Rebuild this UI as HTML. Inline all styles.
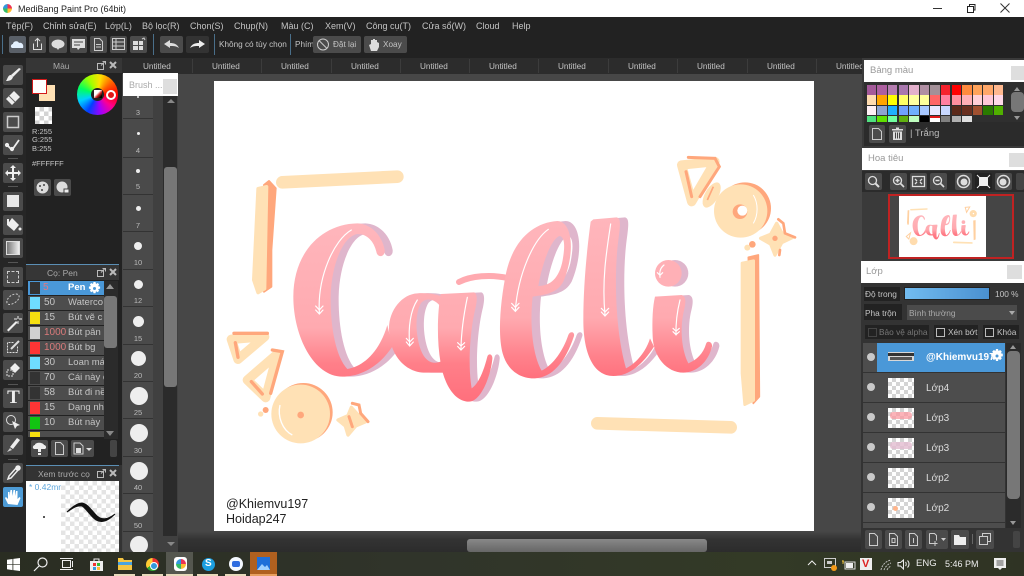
<!DOCTYPE html>
<html><head><meta charset="utf-8"><title>MediBang Paint Pro</title>
<style>
html,body{margin:0;padding:0;background:#222}
#r{position:relative;width:1024px;height:576px;overflow:hidden;background:#474747;font-family:"Liberation Sans","Noto Sans CJK JP",sans-serif;color:#c4c4c4;font-size:10px}
#r div,#r svg{position:absolute}
.t{position:absolute;white-space:nowrap;line-height:12px}
.m{font-size:9px}
.u{font-size:8.200px}
.b{background:#4b4b4b;border-radius:2px}
.ck{background:repeating-conic-gradient(#d4d4d4 0 25%,#fff 0 50%) 0 0/8px 8px}
.h{background:#fff;color:#9a9a9a;font-size:9.500px}
.x{background:#dedede}
.rw{left:28px;width:76px;height:14px;background:#4d4d4d}
.s{left:2px;top:1px;width:10px;height:12px;background:#333}
.la{left:863px;width:142px;height:29px;background:#4d4d4d}
.e{left:4px;top:10px;width:8px;height:8px;border-radius:50%;background:#c9c9c9}
.th{left:25px;top:5px;width:26px;height:20px}
.sw{height:9.500px;width:9.600px}
.n{position:absolute;left:123px;width:30px;text-align:center;font-size:7.500px;color:#bbb;line-height:10px}
.d{background:#eee;border-radius:50%}
.sp{left:123px;width:30px;height:1px;background:#333}
</style></head><body><div id="r">

<!-- title bar -->
<div style="left:0;top:0;width:1024px;height:17px;background:#fff"></div>
<div style="left:3px;top:4px;width:9px;height:9px;border-radius:50%;background:conic-gradient(#e35 0 25%,#fb3 0 50%,#3b6 0 75%,#39d 0)"></div>
<span class="t" style="left:18px;top:3px;color:#222;font-size:9px">MediBang Paint Pro (64bit)</span>
<div style="left:933px;top:8px;width:9px;height:1px;background:#333"></div>
<svg style="left:966px;top:3px" width="10" height="10" fill="none" stroke="#222"><path d="M1.500 3.500h6v6h-6zM3.500 3V1.500h5.500v5.500H8"/></svg>
<svg style="left:1000px;top:3px" width="10" height="10" stroke="#333"><path d="M.5 .5l9 9M9.500 .5l-9 9"/></svg>

<!-- menu -->
<div style="left:0;top:17px;width:1024px;height:41px;background:#222"></div>
<span class="t m" style="left:6px;top:20px">Tệp(F)</span>
<span class="t m" style="left:43px;top:20px">Chỉnh sửa(E)</span>
<span class="t m" style="left:105px;top:20px">Lớp(L)</span>
<span class="t m" style="left:142px;top:20px">Bộ lọc(R)</span>
<span class="t m" style="left:190px;top:20px">Chọn(S)</span>
<span class="t m" style="left:234px;top:20px">Chụp(N)</span>
<span class="t m" style="left:281px;top:20px">Màu (C)</span>
<span class="t m" style="left:325px;top:20px">Xem(V)</span>
<span class="t m" style="left:366px;top:20px">Công cụ(T)</span>
<span class="t m" style="left:422px;top:20px">Cửa sổ(W)</span>
<span class="t m" style="left:476px;top:20px">Cloud</span>
<span class="t m" style="left:512px;top:20px">Help</span>

<!-- toolbar -->
<div style="left:2px;top:35px;width:1px;height:19px;background:#4a6f8a"></div>
<div class="b" style="left:9px;top:36px;width:17px;height:17px;background:#5a6068"></div>
<svg style="left:9px;top:36px" width="17" height="17"><path d="M3 12c-2-1-1-4 1-4 0-3 5-4 6-1 3-1 5 2 4 5z" fill="#e4f1ff"/></svg>
<div class="b" style="left:29px;top:36px;width:17px;height:17px"></div>
<svg style="left:29px;top:36px" width="17" height="17" fill="none" stroke="#ddd"><path d="M4.500 7.500v6h8v-6M8.500 11V3M6 5l2.500-2.500L11 5"/></svg>
<div class="b" style="left:49px;top:36px;width:18px;height:17px"></div>
<svg style="left:49px;top:36px" width="18" height="17"><ellipse cx="9" cy="8" rx="6.500" ry="4.500" fill="#ddd"/><path d="M7 11l2 3 2-3z" fill="#ddd"/></svg>
<div class="b" style="left:70px;top:36px;width:17px;height:17px"></div>
<svg style="left:70px;top:36px" width="17" height="17"><path d="M2 3h13v9H10l-2 2-1-2H2z" fill="#ddd"/><path d="M4 6h9M4 9h6" stroke="#444"/></svg>
<div class="b" style="left:90px;top:36px;width:17px;height:17px"></div>
<svg style="left:90px;top:36px" width="17" height="17" fill="none" stroke="#ccc"><path d="M4.500 2.500h5l3 3v9h-8zM6 8.500h5M6 11h5"/></svg>
<div class="b" style="left:110px;top:36px;width:17px;height:17px"></div>
<svg style="left:110px;top:36px" width="17" height="17" fill="none" stroke="#ccc"><path d="M2.500 2.500h12v11h-12zM2.500 6h12M2.500 10h12M6 2.500v11"/></svg>
<div class="b" style="left:130px;top:36px;width:17px;height:17px"></div>
<svg style="left:130px;top:36px" width="17" height="17"><path d="M3 5h5v4H3zM9 5h4v4H9zM3 10h5v4H3zM9 10h4v4H9z" fill="#ddd"/><path d="M12 3l2-1 1 2" stroke="#ccc" fill="none"/></svg>
<div style="left:153px;top:34px;width:1px;height:21px;background:#4a6f8a"></div>
<div class="b" style="left:160px;top:36px;width:23px;height:17px"></div>
<svg style="left:160px;top:36px" width="23" height="17"><path d="M4 8l6-4v3c4 0 7 1 9 5-3-2-5-2-9-2v2z" fill="#ddd"/></svg>
<div class="b" style="left:186px;top:36px;width:23px;height:17px;background:#333"></div>
<svg style="left:186px;top:36px" width="23" height="17"><path d="M19 8l-6-4v3c-4 0-7 1-9 5 3-2 5-2 9-2v2z" fill="#eee"/></svg>
<div style="left:214px;top:34px;width:1px;height:21px;background:#4a6f8a"></div>
<span class="t" style="left:219px;top:39px;font-size:8.200px">Không có tùy chọn</span>
<div style="left:290px;top:34px;width:1px;height:21px;background:#4a6f8a"></div>
<span class="t" style="left:295px;top:39px;font-size:8.200px">Phím</span>
<div class="b" style="left:313px;top:36px;width:48px;height:17px"></div>
<svg style="left:315px;top:37px" width="16" height="15" fill="none" stroke="#ccc"><circle cx="8" cy="7.500" r="5.500"/><path d="M4 3.500l8 8"/></svg>
<span class="t" style="left:333px;top:39px;font-size:8.200px">Đặt lại</span>
<div class="b" style="left:364px;top:36px;width:43px;height:17px"></div>
<svg style="left:367px;top:37px" width="15" height="15"><path d="M4 14L2 8l2-1V3h2v-1h2v1h2v2l2 1v4l-2 4z" fill="#ddd"/></svg>
<span class="t" style="left:383px;top:39px;font-size:8.200px">Xoay</span>

<!-- tabs -->
<div style="left:122px;top:58px;width:742px;height:16px;background:#2c2c2c"></div>
<span class="t u" style="left:143px;top:61px">Untitled</span>
<span class="t u" style="left:212px;top:61px">Untitled</span>
<span class="t u" style="left:281px;top:61px">Untitled</span>
<span class="t u" style="left:351px;top:61px">Untitled</span>
<span class="t u" style="left:420px;top:61px">Untitled</span>
<span class="t u" style="left:489px;top:61px">Untitled</span>
<span class="t u" style="left:558px;top:61px">Untitled</span>
<span class="t u" style="left:628px;top:61px">Untitled</span>
<span class="t u" style="left:697px;top:61px">Untitled</span>
<span class="t u" style="left:767px;top:61px">Untitled</span>
<span class="t u" style="left:836px;top:61px">Untitled</span>
<div style="left:192px;top:59px;width:1px;height:14px;background:#3c3c3c"></div>
<div style="left:261px;top:59px;width:1px;height:14px;background:#3c3c3c"></div>
<div style="left:331px;top:59px;width:1px;height:14px;background:#3c3c3c"></div>
<div style="left:400px;top:59px;width:1px;height:14px;background:#3c3c3c"></div>
<div style="left:469px;top:59px;width:1px;height:14px;background:#3c3c3c"></div>
<div style="left:538px;top:59px;width:1px;height:14px;background:#3c3c3c"></div>
<div style="left:608px;top:59px;width:1px;height:14px;background:#3c3c3c"></div>
<div style="left:677px;top:59px;width:1px;height:14px;background:#3c3c3c"></div>
<div style="left:747px;top:59px;width:1px;height:14px;background:#3c3c3c"></div>
<div style="left:816px;top:59px;width:1px;height:14px;background:#3c3c3c"></div>

<!-- left tool column -->
<div style="left:0;top:58px;width:26px;height:494px;background:#262626"></div>
<div class="b" style="left:3px;top:65px;width:20px;height:20px"></div>
<svg style="left:3px;top:65px" width="20" height="20"><path d="M16 3l2 1-8 8-2-2z" fill="#eee"/><path d="M8 10c-3 0-3 3-5 6 4 0 6-1 7-4z" fill="#eee"/></svg>
<div class="b" style="left:3px;top:88px;width:20px;height:20px"></div>
<svg style="left:3px;top:88px" width="20" height="20"><path d="M11 3l6 6-8 8-6-6z" fill="#eee"/><path d="M6 8l6 6" stroke="#666"/></svg>
<div class="b" style="left:3px;top:112px;width:20px;height:20px"></div>
<svg style="left:3px;top:112px" width="20" height="20" fill="none" stroke="#ccc" stroke-width="1.500"><path d="M4.500 4.500h11v11h-11z"/></svg>
<div class="b" style="left:3px;top:135px;width:20px;height:20px"></div>
<svg style="left:3px;top:135px" width="20" height="20" fill="none" stroke="#eee" stroke-width="1.800"><path d="M4 10l5 5 7-10"/><circle cx="4" cy="10" r="1.200" fill="#eee"/><circle cx="9" cy="14" r="1.200" fill="#eee"/></svg>
<div style="left:8px;top:158px;width:10px;height:1px;background:#555"></div>
<div class="b" style="left:3px;top:163px;width:20px;height:20px"></div>
<svg style="left:3px;top:163px" width="20" height="20" fill="#eee"><path d="M10 2l3 3h-2v4h4V7l3 3-3 3v-2h-4v4h2l-3 3-3-3h2v-4H5v2l-3-3 3-3v2h4V5H7z"/></svg>
<div style="left:8px;top:186px;width:10px;height:1px;background:#555"></div>
<div class="b" style="left:3px;top:192px;width:20px;height:19px"></div>
<div style="left:7px;top:195px;width:12px;height:12px;background:#e8e8e8"></div>
<div class="b" style="left:3px;top:215px;width:20px;height:20px"></div>
<svg style="left:3px;top:215px" width="20" height="20"><path d="M9 3l7 7-5 6-7-6z" fill="#eee"/><path d="M5 4v6" stroke="#eee" stroke-width="2"/><circle cx="17" cy="14" r="1.500" fill="#eee"/></svg>
<div class="b" style="left:3px;top:238px;width:20px;height:20px"></div>
<div style="left:6px;top:241px;width:14px;height:14px;background:linear-gradient(90deg,#777,#eee);border:1px solid #ddd;box-sizing:border-box"></div>
<div style="left:8px;top:262px;width:10px;height:1px;background:#555"></div>
<div class="b" style="left:3px;top:267px;width:20px;height:20px"></div>
<div style="left:7px;top:271px;width:10px;height:10px;border:1px dashed #ccc"></div>
<div class="b" style="left:3px;top:290px;width:20px;height:20px"></div>
<svg style="left:3px;top:290px" width="20" height="20" fill="none" stroke="#ccc" stroke-dasharray="2 1.500"><path d="M4 13c-1-4 4-9 9-9 4 0 4 4 1 7-3 3-9 5-10 2z"/></svg>
<div class="b" style="left:3px;top:313px;width:20px;height:20px"></div>
<svg style="left:3px;top:313px" width="20" height="20"><path d="M4 17L13 8l1.500 1.500-9 9z" fill="#eee"/><path d="M15 3v3M15 8v3M11 6h3M16 6h3" stroke="#eee"/></svg>
<div class="b" style="left:3px;top:337px;width:20px;height:20px"></div>
<svg style="left:3px;top:337px" width="20" height="20" fill="none" stroke="#ddd"><path d="M14.500 9.500v6h-10v-10h6" stroke-dasharray="2 1"/><path d="M8 12l8-8" stroke-width="2"/></svg>
<div class="b" style="left:3px;top:360px;width:20px;height:20px"></div>
<svg style="left:3px;top:360px" width="20" height="20"><path d="M12 3l5 5-5 5-5-5z" fill="#eee"/><path d="M4 10h6v6H4z" fill="none" stroke="#ddd" stroke-dasharray="2 1"/></svg>
<div style="left:8px;top:384px;width:10px;height:1px;background:#555"></div>
<div class="b" style="left:3px;top:388px;width:20px;height:20px"></div>
<span class="t" style="left:5px;top:388px;width:17px;text-align:center;font:bold 19px/20px 'Liberation Serif',serif;color:#eee">T</span>
<div class="b" style="left:3px;top:412px;width:20px;height:20px"></div>
<svg style="left:3px;top:412px" width="20" height="20" fill="none" stroke="#ddd"><circle cx="8" cy="8" r="4.500"/><path d="M9 9l3 8 2-3 3-1z" fill="#eee" stroke="none"/></svg>
<div class="b" style="left:3px;top:435px;width:20px;height:20px"></div>
<svg style="left:3px;top:435px" width="20" height="20"><path d="M14 3l3 2-7 9-3-2z" fill="#eee"/><path d="M7 13l2 2-5 2z" fill="#ccc"/></svg>
<div style="left:8px;top:459px;width:10px;height:1px;background:#555"></div>
<div class="b" style="left:3px;top:463px;width:20px;height:20px"></div>
<svg style="left:3px;top:463px" width="20" height="20" fill="none" stroke="#eee" stroke-width="1.500"><path d="M14 4l2 2-8 9-3 1 1-3z"/><circle cx="15" cy="5" r="2" fill="#eee"/></svg>
<div class="b" style="left:3px;top:487px;width:20px;height:20px;background:#4d9bd6"></div>
<svg style="left:3px;top:487px" width="20" height="20" fill="#fff"><path d="M5 17l-3-6 1-1 2 2V5h1.500v4L7.500 3h1.500l.5 6 1-6h1.500v6l1-5h1.500v8l2-2 1 1-3 7z"/></svg>

<!-- colour panel -->
<div style="left:26px;top:58px;width:96px;height:206px;background:#222"></div>
<div style="left:26px;top:58px;width:96px;height:15px;background:#363636"></div>
<span class="t" style="left:53px;top:60px;font-size:8.500px;color:#aaa">Màu</span>
<svg style="left:96px;top:60px" width="24" height="11" fill="none" stroke="#bbb"><path d="M1.500 3.500h6v6h-6zM5 5.500l4-4M6.500 1.500h3v3"/><path d="M14 2l6 6M20 2l-6 6" stroke-width="2"/></svg>
<div style="left:39px;top:85px;width:16px;height:16px;background:#ffe1b5"></div>
<div style="left:32px;top:79px;background:#fff;border:1.500px solid #d21a1a;box-sizing:content-box;width:13px;height:13px"></div>
<div class="ck" style="left:35px;top:107px;width:17px;height:17px;background-size:9px 9px"></div>
<div style="left:77px;top:74px;width:41px;height:41px;border-radius:50%;background:conic-gradient(from 90deg,#f00,#ff0090,#a000ff,#0040ff,#00d0ff,#00ff60,#a0ff00,#ffe000,#ff6000,#f00)"></div>
<div style="left:91px;top:88px;width:13px;height:13px;border-radius:50%;background:#222"></div>
<div style="left:94px;top:90px;width:8px;height:8px;background:linear-gradient(135deg,#fff 40%,#c22 60%,#000 85%)"></div>
<div style="left:106px;top:90px;width:6px;height:6px;border-radius:50%;background:#e01818;border:2px solid #fff"></div>
<span class="t" style="left:32px;top:128px;font-size:7.500px;line-height:8.300px">R:255<br>G:255<br>B:255</span>
<span class="t" style="left:32px;top:158px;font-size:7.500px">#FFFFFF</span>
<div class="b" style="left:34px;top:179px;width:17px;height:17px"></div>
<svg style="left:34px;top:179px" width="17" height="17"><circle cx="8.500" cy="8.500" r="6" fill="#ddd"/><circle cx="6" cy="7" r="1" fill="#444"/><circle cx="10" cy="6" r="1" fill="#444"/><circle cx="8" cy="11" r="1" fill="#444"/></svg>
<div class="b" style="left:54px;top:179px;width:17px;height:17px"></div>
<svg style="left:54px;top:179px" width="17" height="17"><circle cx="8" cy="8" r="5.500" fill="#ddd"/><path d="M10 10h5v4h-5z" fill="#eee" stroke="#444"/></svg>

<!-- brush size panel -->
<div style="left:123px;top:96px;width:30px;height:456px;background:#4a4a4a"></div>
<div style="left:153px;top:96px;width:25px;height:456px;background:#404040"></div>
<div style="left:163px;top:96px;width:14px;height:440px;background:#2b2b2b"></div>
<div style="left:164px;top:167px;width:13px;height:220px;background:#777;border-radius:3px"></div>
<div style="left:167px;top:99px;width:0;height:0;border:4px solid transparent;border-top:0;border-bottom:4px solid #888"></div>
<div style="left:167px;top:542px;width:0;height:0;border:4px solid transparent;border-bottom:0;border-top:4px solid #888"></div>
<div class="h" style="left:123px;top:73px;width:55px;height:23px"></div>
<span class="t" style="left:129px;top:79px;font-size:9px;color:#aaa">Brush ...</span>
<div class="x" style="left:163px;top:79px;width:14px;height:15px"></div>
<span class="n" style="top:108px">3</span><div class="sp" style="top:118px"></div>
<span class="n" style="top:146px">4</span><div class="sp" style="top:157px"></div>
<span class="n" style="top:182px">5</span><div class="sp" style="top:194px"></div>
<span class="n" style="top:221px">7</span><div class="sp" style="top:231px"></div>
<span class="n" style="top:258px">10</span><div class="sp" style="top:269px"></div>
<span class="n" style="top:296px">12</span><div class="sp" style="top:306px"></div>
<span class="n" style="top:334px">15</span><div class="sp" style="top:344px"></div>
<span class="n" style="top:371px">20</span><div class="sp" style="top:381px"></div>
<span class="n" style="top:408px">25</span><div class="sp" style="top:418px"></div>
<span class="n" style="top:446px">30</span><div class="sp" style="top:456px"></div>
<span class="n" style="top:483px">40</span><div class="sp" style="top:493px"></div>
<span class="n" style="top:521px">50</span><div class="sp" style="top:531px"></div>
<div class="d" style="left:137px;top:96px;width:2px;height:2px"></div>
<div class="d" style="left:137px;top:132px;width:3px;height:3px"></div>
<div class="d" style="left:136px;top:169px;width:4px;height:4px"></div>
<div class="d" style="left:136px;top:206px;width:5px;height:5px"></div>
<div class="d" style="left:134px;top:242px;width:8px;height:8px"></div>
<div class="d" style="left:134px;top:280px;width:9px;height:9px"></div>
<div class="d" style="left:133px;top:316px;width:11px;height:11px"></div>
<div class="d" style="left:131px;top:351px;width:15px;height:15px"></div>
<div class="d" style="left:130px;top:387px;width:18px;height:18px"></div>
<div class="d" style="left:130px;top:424px;width:18px;height:18px"></div>
<div class="d" style="left:130px;top:462px;width:18px;height:18px"></div>
<div class="d" style="left:130px;top:499px;width:18px;height:18px"></div>
<div class="d" style="left:130px;top:536px;width:18px;height:18px"></div>

<!-- brush list panel -->
<div style="left:26px;top:264px;width:96px;height:201px;background:#222"></div>
<div style="left:26px;top:264px;width:93px;height:1px;background:#5b8fb5"></div>
<div style="left:26px;top:265px;width:93px;height:15px;background:#363636"></div>
<span class="t" style="left:47px;top:267px;font-size:8.500px;color:#aaa">Cọ: Pen</span>
<svg style="left:96px;top:267px" width="24" height="11" fill="none" stroke="#bbb"><path d="M1.500 3.500h6v6h-6zM5 5.500l4-4M6.500 1.500h3v3"/><path d="M14 2l6 6M20 2l-6 6" stroke-width="2"/></svg>
<div style="left:104px;top:281px;width:14px;height:158px;background:#2b2b2b"></div>
<div style="left:104px;top:296px;width:13px;height:52px;background:#777;border-radius:3px"></div>
<div style="left:106px;top:284px;width:0;height:0;border:4px solid transparent;border-top:0;border-bottom:5px solid #999"></div>
<div style="left:106px;top:431px;width:0;height:0;border:4px solid transparent;border-bottom:0;border-top:5px solid #888"></div>

<div class="rw" style="top:281px;background:#4a98d8"><div class="s"></div>
<span class="t" style="left:15px;top:1px;color:#e6787f;font-size:10px">5</span><span class="t" style="left:40px;top:1px;color:#fff;font-weight:bold;font-size:9.500px">Pen</span></div>
<svg style="left:88px;top:282px" width="13" height="13"><path d="M5.500 0h2l.5 2 1.700-1 1.400 1.400-1 1.700 2 .5v2l-2 .5 1 1.700-1.400 1.400-1.700-1-.5 2h-2l-.5-2-1.700 1-1.400-1.400 1-1.700-2-.5v-2l2-.5-1-1.700L3.300 1 5 2z" fill="#fff"/><circle cx="6.500" cy="6.500" r="1.500" fill="#4a98d8"/></svg>
<div class="rw" style="top:296px;overflow:hidden"><div class="s" style="background:#6fdcff"></div><span class="t" style="left:16px;top:1px">50</span><span class="t" style="left:40px;top:1px;font-size:9.500px">Waterco</span></div>
<div class="rw" style="top:311px;overflow:hidden"><div class="s" style="background:#f5df10"></div><span class="t" style="left:16px;top:1px">15</span><span class="t" style="left:40px;top:1px;font-size:9.500px">Bút vẽ c</span></div>
<div class="rw" style="top:326px;overflow:hidden"><div class="s" style="background:#d0d0d0"></div><span class="t" style="left:16px;top:1px;color:#d97a7a">1000</span><span class="t" style="left:40px;top:1px;font-size:9.500px">Bút pân</span></div>
<div class="rw" style="top:341px;overflow:hidden"><div class="s" style="background:#ff3535"></div><span class="t" style="left:16px;top:1px;color:#d97a7a">1000</span><span class="t" style="left:40px;top:1px;font-size:9.500px">Bút bg</span></div>
<div class="rw" style="top:356px;overflow:hidden"><div class="s" style="background:#6fdcff"></div><span class="t" style="left:16px;top:1px">30</span><span class="t" style="left:40px;top:1px;font-size:9.500px">Loan má</span></div>
<div class="rw" style="top:371px;overflow:hidden"><div class="s"></div><span class="t" style="left:16px;top:1px">70</span><span class="t" style="left:40px;top:1px;font-size:9.500px">Cái này c</span></div>
<div class="rw" style="top:386px;overflow:hidden"><div class="s"></div><span class="t" style="left:16px;top:1px">58</span><span class="t" style="left:40px;top:1px;font-size:9.500px">Bút đi nề</span></div>
<div class="rw" style="top:401px;overflow:hidden"><div class="s" style="background:#ff3535"></div><span class="t" style="left:16px;top:1px">15</span><span class="t" style="left:40px;top:1px;font-size:9.500px">Dạng nh</span></div>
<div class="rw" style="top:416px;overflow:hidden"><div class="s" style="background:#12c412"></div><span class="t" style="left:16px;top:1px">10</span><span class="t" style="left:40px;top:1px;font-size:9.500px">Bút này</span></div>
<div class="rw" style="top:431px;height:6px;overflow:hidden"><div class="s" style="background:#f5df10"></div></div>
<div class="b" style="left:31px;top:440px;width:17px;height:17px"></div>
<svg style="left:31px;top:440px" width="17" height="17"><path d="M3 9c-2-1-1-4 1-4 0-3 8-3 9 0 2 0 3 3 1 4h-4v3H7V9z" fill="#eee"/><path d="M7 13h3v2H7z" fill="#eee"/></svg>
<div class="b" style="left:51px;top:440px;width:17px;height:17px"></div>
<svg style="left:51px;top:440px" width="17" height="17" fill="none" stroke="#ccc"><path d="M4.500 2.500h5l3 3v9h-8z"/></svg>
<div class="b" style="left:71px;top:440px;width:23px;height:17px"></div>
<svg style="left:71px;top:440px" width="23" height="17"><path d="M3 3h6l3 3v8H3z" fill="none" stroke="#ccc"/><path d="M5 8h5v5H5z" fill="#ddd"/><path d="M15 8h6l-3 3z" fill="#ddd"/></svg>
<div style="left:110px;top:440px;width:7px;height:17px;background:#444;border-radius:2px"></div>

<!-- brush preview -->
<div style="left:26px;top:465px;width:96px;height:87px;background:#333"></div>
<div style="left:26px;top:465px;width:93px;height:1px;background:#5b8fb5"></div>
<span class="t" style="left:38px;top:468px;font-size:8.500px;color:#aaa">Xem trước cọ</span>
<svg style="left:96px;top:468px" width="24" height="11" fill="none" stroke="#bbb"><path d="M1.500 3.500h6v6h-6zM5 5.500l4-4M6.500 1.500h3v3"/><path d="M14 2l6 6M20 2l-6 6" stroke-width="2"/></svg>
<div style="left:26px;top:481px;width:35px;height:72px;background:#fff"></div>
<div class="ck" style="left:61px;top:481px;width:58px;height:72px;background-size:9px 9px;background-image:repeating-conic-gradient(#e4e4e4 0 25%,#fff 0 50%)"></div>
<span class="t" style="left:29px;top:481px;width:32px;overflow:hidden;font-size:8.500px;color:#5fa7dd">* 0.42mm</span>
<div style="left:43px;top:516px;width:2px;height:2px;background:#222;border-radius:50%"></div>
<svg style="left:61px;top:495px" width="58" height="50" fill="none"><path d="M6 17C12 11 17 8 21 8C27 9 30 15 36 21C41 25 46 25 54 19C46 27 40 28 35 25C29 21 26 14 21 11C16 10 12 13 6 17Z" fill="#111" stroke="#111"/></svg>

<!-- canvas -->
<div style="left:214px;top:81px;width:600px;height:450px;background:#fff"></div>
<svg style="left:214px;top:81px" width="600" height="450" viewBox="214 81 600 450">
<defs>
<linearGradient id="g1" gradientUnits="userSpaceOnUse" x1="0" y1="220" x2="0" y2="760"><stop offset="0" stop-color="#ffb6bc"/><stop offset=".58" stop-color="#ffaab0"/><stop offset=".78" stop-color="#ff7f89"/><stop offset="1" stop-color="#ff6f7c"/></linearGradient>
<linearGradient id="g2" gradientUnits="userSpaceOnUse" x1="0" y1="230" x2="0" y2="720"><stop offset="0" stop-color="#ffb6bc"/><stop offset=".62" stop-color="#ffaab0"/><stop offset=".85" stop-color="#ff828c"/><stop offset="1" stop-color="#ff6f7c"/></linearGradient>
</defs>
<g transform="translate(214,150) scale(.33333)">
<path d="M205,97L550,80" stroke="#ffe1b5" stroke-width="38" stroke-linecap="round" fill="none"/>
<path d="M150,105L165,93L185,115L172,300L172,410L150,425Z" fill="#ffa77c" stroke="#ffa77c" stroke-width="6" stroke-linejoin="round"/>
<path d="M132,116L158,110L152,416L132,428L119,390Z" fill="#ffe1b5" stroke="#ffe1b5" stroke-width="10" stroke-linejoin="round"/>
<g fill="#fff" stroke="#ffe1b5" stroke-width="28" stroke-linejoin="round"><path d="M52,568L152,560L72,628Z"/><path d="M190,612L100,690L155,743Z"/></g>
<path d="M60,550L160,550M64,578L72,622M175,600L205,605L170,730M112,695L145,732" stroke="#ffa77c" stroke-width="10" fill="none" stroke-linecap="round"/>
<circle cx="268" cy="787" r="88" fill="#ffa77c"/><circle cx="260" cy="792" r="88" fill="#ffe1b5"/><circle cx="260" cy="795" r="10" fill="#ffa77c"/>
<path d="M198,765C190,800 205,840 235,855" stroke="#fff" stroke-width="4" fill="none"/>
<circle cx="155" cy="780" r="9" fill="#ffa77c"/><circle cx="140" cy="792" r="8" fill="#ffe1b5"/>
<path d="M372,810L402,797L412,772L430,792L455,815L425,828L402,855L394,828Z" fill="#ffe1b5" stroke="#ffe1b5" stroke-width="10" stroke-linejoin="round"/>
<path d="M415,760L435,765L440,790L462,815M405,800L415,830" stroke="#ffa77c" stroke-width="9" fill="none" stroke-linecap="round"/>
<g fill="#dfb6cc">
<path transform="translate(24,0)" d="M430,220C475,222 505,260 512,300C514,322 490,325 487,305C480,275 460,252 432,252C390,255 352,340 350,440C349,530 365,620 400,657C445,650 495,610 520,525L535,590C495,650 440,680 385,680C300,680 238,560 238,440C238,310 320,222 430,220Z"/>
<path transform="translate(22,0)" d="M610,430C565,432 525,480 525,535C525,610 570,668 635,668L690,668L690,630C665,645 640,640 625,610C605,570 600,490 622,458C640,440 665,450 680,470L695,445C670,432 640,428 610,430Z"/>
<path transform="translate(22,0)" d="M680,432L780,427C790,430 790,448 785,472C770,530 760,640 773,715C795,700 810,660 820,620C823,608 837,612 835,627C830,680 800,755 765,755C720,755 690,700 680,640C668,570 670,490 680,432Z"/>
</g>
<g fill="url(#g1)">
<path d="M430,220C475,222 505,260 512,300C514,322 490,325 487,305C480,275 460,252 432,252C390,255 352,340 350,440C349,530 365,620 400,657C445,650 495,610 520,525L535,590C495,650 440,680 385,680C300,680 238,560 238,440C238,310 320,222 430,220Z"/>
<path d="M610,430C565,432 525,480 525,535C525,610 570,668 635,668L690,668L690,630C665,645 640,640 625,610C605,570 600,490 622,458C640,440 665,450 680,470L695,445C670,432 640,428 610,430Z"/>
<path d="M680,432L780,427C790,430 790,448 785,472C770,530 760,640 773,715C795,700 810,660 820,620C823,608 837,612 835,627C830,680 800,755 765,755C720,755 690,700 680,640C668,570 670,490 680,432Z"/>
</g>
<path d="M735,396C770,378 830,372 885,385" stroke="#ffaab0" stroke-width="18" stroke-linecap="round" fill="none"/>
<g stroke="#fff" stroke-width="3.500" fill="none" stroke-linecap="round">
<path d="M412,240C360,270 310,380 316,488M305,468L316,480L327,468M305,480L316,492L327,480"/>
<path d="M610,450C590,480 582,530 587,585M577,565L587,576L598,565M577,576L587,588L598,576"/>
<path d="M760,442C750,490 742,540 741,595M731,578L741,588L752,578M731,589L741,600L752,589"/>
</g>
</g>
<g transform="translate(500,140) scale(.33333)">
<path d="M292,850L692,862" stroke="#ffe1b5" stroke-width="38" stroke-linecap="round" fill="none"/>
<path d="M745,352L775,345L778,770L760,790Z" fill="#ffa77c" stroke="#ffa77c" stroke-width="5" stroke-linejoin="round"/>
<path d="M726,369L761,362L761,781L734,794L726,700Z" fill="#ffe1b5" stroke="#ffe1b5" stroke-width="8" stroke-linejoin="round"/>
<path d="M545,75L645,65L575,185Z" fill="#fff" stroke="#ffe1b5" stroke-width="28" stroke-linejoin="round"/>
<path d="M565,52L645,55L658,80L600,170M558,95L575,170" stroke="#ffa77c" stroke-width="9" fill="none" stroke-linecap="round"/>
<ellipse cx="635" cy="165" rx="20" ry="42" transform="rotate(30 635 165)" fill="#ffe1b5"/>
<path d="M640,140L622,180" stroke="#ffa77c" stroke-width="5"/>
<circle cx="735" cy="205" r="78" fill="#ffa77c"/><circle cx="722" cy="213" r="80" fill="#ffe1b5"/>
<circle cx="720" cy="215" r="22" fill="#ffa77c"/><circle cx="727" cy="212" r="15" fill="#fff"/>
<path d="M760,165C775,190 775,225 760,250" stroke="#fff" stroke-width="3" fill="none"/>
<path d="M782,295L812,283L830,250L845,278L878,292L845,308L825,345L812,312Z" fill="#ffe1b5" stroke="#ffe1b5" stroke-width="10" stroke-linejoin="round"/>
<path d="M835,238L850,250L855,280L885,292M840,330L838,345" stroke="#ffa77c" stroke-width="8" fill="none" stroke-linecap="round"/>
<circle cx="825" cy="295" r="8" fill="#ffa77c"/>
<circle cx="757" cy="313" r="10" fill="#ffa77c"/><circle cx="742" cy="323" r="9" fill="#ffe1b5"/>
<g fill="#dfb6cc">
<path transform="translate(25,0)" fill-rule="evenodd" d="M172,243C100,248 40,300 18,400C2,480 -8,580 8,640C22,690 60,717 105,715C155,712 195,670 222,588C225,575 210,572 205,585C190,630 160,675 125,692C100,650 88,560 98,470C130,465 170,462 190,425C207,385 218,330 210,290C205,260 190,243 172,243ZM178,288C150,300 125,380 115,438C150,438 178,415 188,360C195,320 195,290 178,288Z"/>
<path transform="translate(25,0)" d="M280,238L350,232C362,235 362,250 355,300C342,400 345,570 378,685C410,670 440,630 450,595L462,620C430,670 390,708 340,708C280,708 250,640 250,540C250,430 262,320 272,245Z"/>
<path transform="translate(22,0)" d="M465,470L545,465C560,470 558,490 550,520C540,570 545,630 565,670C590,660 610,640 618,612C621,600 638,605 636,620C625,665 590,698 550,698C500,698 460,650 458,590C456,540 458,500 465,470Z"/>
<circle cx="525" cy="400" r="40"/>
</g>
<g fill="url(#g2)">
<path fill-rule="evenodd" d="M172,243C100,248 40,300 18,400C2,480 -8,580 8,640C22,690 60,717 105,715C155,712 195,670 222,588C225,575 210,572 205,585C190,630 160,675 125,692C100,650 88,560 98,470C130,465 170,462 190,425C207,385 218,330 210,290C205,260 190,243 172,243ZM178,288C150,300 125,380 115,438C150,438 178,415 188,360C195,320 195,290 178,288Z"/>
<path d="M280,238L350,232C362,235 362,250 355,300C342,400 345,570 378,685C410,670 440,630 450,595L462,620C430,670 390,708 340,708C280,708 250,640 250,540C250,430 262,320 272,245Z"/>
<path d="M465,470L545,465C560,470 558,490 550,520C540,570 545,630 565,670C590,660 610,640 618,612C621,600 638,605 636,620C625,665 590,698 550,698C500,698 460,650 458,590C456,540 458,500 465,470Z"/>
<circle cx="505" cy="400" r="40" fill="#ffb0b6"/>
</g>
<g stroke="#fff" stroke-width="3.500" fill="none" stroke-linecap="round">
<path d="M145,268C100,300 55,400 46,510M35,490L46,502L57,490M35,502L46,514L57,502"/>
<path d="M332,252C320,330 305,420 315,525M304,505L315,516L326,505M304,516L315,528L326,516"/>
<path d="M492,375C480,385 478,395 480,412M472,398L480,406L488,398"/>
<path d="M540,480C530,520 527,550 528,585M519,565L528,574L538,565M519,575L528,584L538,575"/>
</g>
</g>
</svg>
<span class="t" style="left:226px;top:496px;font-size:12.500px;line-height:16px;color:#222">@Khiemvu197</span>
<span class="t" style="left:226px;top:511px;font-size:12.500px;line-height:16px;color:#222">Hoidap247</span>

<!-- bottom scroll -->
<div style="left:178px;top:531px;width:686px;height:21px;background:linear-gradient(#474747,#333 40%,#2c2c2c)"></div>
<div style="left:467px;top:539px;width:240px;height:13px;background:linear-gradient(#888,#666);border-radius:3px"></div>

<!-- right: palette -->
<div style="left:862px;top:58px;width:162px;height:494px;background:#3a3a3a"></div>
<div class="h" style="left:864px;top:60px;width:160px;height:22px"></div>
<span class="t" style="left:870px;top:65px;font-size:9.500px;color:#999">Bảng màu</span>
<div class="x" style="left:1011px;top:66px;width:13px;height:14px"></div>
<div style="left:864px;top:82px;width:160px;height:40px;background:#2f2f2f"></div>
<div style="left:1011px;top:92px;width:13px;height:20px;background:#777;border-radius:4px"></div>
<div style="left:1014px;top:87px;width:0;height:0;border:3px solid transparent;border-top:0;border-bottom:4px solid #999"></div>
<div style="left:1014px;top:116px;width:0;height:0;border:3px solid transparent;border-bottom:0;border-top:4px solid #999"></div>
<div class="sw" style="left:866.700px;top:85px;background:#a45a9a"></div><div class="sw" style="left:877.300px;top:85px;background:#ad5fa0"></div><div class="sw" style="left:887.900px;top:85px;background:#b57db0"></div><div class="sw" style="left:898.500px;top:85px;background:#a978ae"></div><div class="sw" style="left:909.100px;top:85px;background:#e3b0cc"></div><div class="sw" style="left:919.700px;top:85px;background:#b08fa3"></div><div class="sw" style="left:930.300px;top:85px;background:#a39098"></div><div class="sw" style="left:940.900px;top:85px;background:#f5222d"></div><div class="sw" style="left:951.500px;top:85px;background:#ff0000"></div><div class="sw" style="left:962.100px;top:85px;background:#ff8a3e"></div><div class="sw" style="left:972.700px;top:85px;background:#ffa35b"></div><div class="sw" style="left:983.300px;top:85px;background:#ffa86a"></div><div class="sw" style="left:993.900px;top:85px;background:#ffb88f"></div>
<div class="sw" style="left:866.700px;top:95.300px;background:#ffdcb0"></div><div class="sw" style="left:877.300px;top:95.300px;background:#ffa500"></div><div class="sw" style="left:887.900px;top:95.300px;background:#ffff00"></div><div class="sw" style="left:898.500px;top:95.300px;background:#ffff66"></div><div class="sw" style="left:909.100px;top:95.300px;background:#ffffa0"></div><div class="sw" style="left:919.700px;top:95.300px;background:#ffff99"></div><div class="sw" style="left:930.300px;top:95.300px;background:#ff6666"></div><div class="sw" style="left:940.900px;top:95.300px;background:#ff80a0"></div><div class="sw" style="left:951.500px;top:95.300px;background:#ff8f9f"></div><div class="sw" style="left:962.100px;top:95.300px;background:#ffb0b8"></div><div class="sw" style="left:972.700px;top:95.300px;background:#ffd0d8"></div><div class="sw" style="left:983.300px;top:95.300px;background:#ffc8d8"></div><div class="sw" style="left:993.900px;top:95.300px;background:#ffd8e8"></div>
<div class="sw" style="left:866.700px;top:105.700px;background:#fff0f5"></div><div class="sw" style="left:877.300px;top:105.700px;background:#8ea4d0"></div><div class="sw" style="left:887.900px;top:105.700px;background:#1eb0ff"></div><div class="sw" style="left:898.500px;top:105.700px;background:#70a0ff"></div><div class="sw" style="left:909.100px;top:105.700px;background:#70b0ff"></div><div class="sw" style="left:919.700px;top:105.700px;background:#a8c8ff"></div><div class="sw" style="left:930.300px;top:105.700px;background:#e8e8ff"></div><div class="sw" style="left:940.900px;top:105.700px;background:#c8d8ff"></div><div class="sw" style="left:951.500px;top:105.700px;background:#5c2a1a"></div><div class="sw" style="left:962.100px;top:105.700px;background:#6a3020"></div><div class="sw" style="left:972.700px;top:105.700px;background:#a05030"></div><div class="sw" style="left:983.300px;top:105.700px;background:#2a7a00"></div><div class="sw" style="left:993.900px;top:105.700px;background:#50b000"></div>
<div class="sw" style="left:866.700px;top:116px;height:6px;background:#50e080"></div><div class="sw" style="left:877.300px;top:116px;height:6px;background:#60e000"></div><div class="sw" style="left:887.900px;top:116px;height:6px;background:#70ffa0"></div><div class="sw" style="left:898.500px;top:116px;height:6px;background:#60b010"></div><div class="sw" style="left:909.100px;top:116px;height:6px;background:#c0ffc0"></div><div class="sw" style="left:919.700px;top:116px;height:6px;background:#000"></div><div class="sw" style="left:930.300px;top:116px;height:6px;background:#fff;border-top:2px solid #e01818;box-sizing:border-box"></div><div class="sw" style="left:940.900px;top:116px;height:6px;background:#808080"></div><div class="sw" style="left:951.500px;top:116px;height:6px;background:#b0b0b0"></div><div class="sw" style="left:962.100px;top:116px;height:6px;background:#e0e0e0"></div>
<div style="left:864px;top:122px;width:160px;height:24px;background:#2b2b2b"></div>
<div class="b" style="left:869px;top:125px;width:16px;height:18px"></div>
<svg style="left:869px;top:125px" width="16" height="18" fill="none" stroke="#ccc"><path d="M3.500 3.500h6l3 3v8h-9z"/></svg>
<div class="b" style="left:889px;top:125px;width:17px;height:18px"></div>
<svg style="left:889px;top:125px" width="17" height="18" fill="#ddd"><path d="M3 4h11v1.500H3zM7 2.500h3V4H7zM4 6.500h9V15H4z"/><path d="M6.500 7.500v6M8.500 7.500v6M10.500 7.500v6" stroke="#444"/></svg>
<span class="t" style="left:910px;top:128px;font-size:9.500px;color:#bbb">| Trắng</span>

<!-- navigator -->
<div class="h" style="left:862px;top:148px;width:162px;height:22px"></div>
<span class="t" style="left:868px;top:153px;font-size:9.500px;color:#999">Hoa tiêu</span>
<div class="x" style="left:1009px;top:153px;width:15px;height:14px"></div>
<div style="left:862px;top:171px;width:162px;height:21px;background:#2b2b2b"></div>
<div class="b" style="left:865px;top:173px;width:17px;height:17px"></div>
<div class="b" style="left:890px;top:173px;width:17px;height:17px"></div>
<div class="b" style="left:910px;top:173px;width:17px;height:17px"></div>
<div class="b" style="left:930px;top:173px;width:17px;height:17px"></div>
<div class="b" style="left:955px;top:173px;width:17px;height:17px"></div>
<div class="b" style="left:975px;top:173px;width:17px;height:17px;background:#222"></div>
<div class="b" style="left:995px;top:173px;width:17px;height:17px"></div>
<div class="b" style="left:1016px;top:173px;width:8px;height:17px;background:#444"></div>
<svg style="left:865px;top:173px" width="17" height="17" fill="none" stroke="#ddd" stroke-width="1.300"><circle cx="7.500" cy="7.500" r="4"/><path d="M10.500 10.500l3.500 3.500" stroke-width="2"/></svg>
<svg style="left:890px;top:173px" width="17" height="17" fill="none" stroke="#ddd" stroke-width="1.300"><circle cx="7.500" cy="7.500" r="4"/><path d="M10.500 10.500l3.500 3.500M5.500 7.500h4M7.500 5.500v4" stroke-width="1.600"/></svg>
<svg style="left:910px;top:173px" width="17" height="17" fill="none" stroke="#ddd" stroke-width="1.300"><path d="M2.500 3.500h12v10h-12zM5 6l2 2M12 6l-2 2M5 11l2-2M12 11l-2-2"/></svg>
<svg style="left:930px;top:173px" width="17" height="17" fill="none" stroke="#ddd" stroke-width="1.300"><circle cx="7.500" cy="7.500" r="4"/><path d="M10.500 10.500l3.500 3.500M5.500 7.500h4" stroke-width="1.600"/></svg>
<svg style="left:955px;top:173px" width="17" height="17"><circle cx="8.500" cy="8.500" r="6" fill="none" stroke="#ddd" stroke-width="1.500"/><circle cx="9" cy="9" r="3.500" fill="#ddd"/></svg>
<svg style="left:975px;top:173px" width="17" height="17"><path d="M4 4h9v9H4z" fill="#eee"/><path d="M2 2l3 3M15 2l-3 3M2 15l3-3M15 15l-3-3" stroke="#eee"/></svg>
<svg style="left:995px;top:173px" width="17" height="17"><circle cx="8.500" cy="8.500" r="6" fill="none" stroke="#ddd" stroke-width="1.500"/><circle cx="8" cy="9" r="3.500" fill="#ddd"/></svg>
<div style="left:862px;top:192px;width:162px;height:69px;background:#3a3a3a"></div>
<div style="left:888px;top:194px;width:126px;height:65px;background:#454545;border:2px solid #c02222;box-sizing:border-box"></div>
<div style="left:899px;top:196px;width:87px;height:61px;background:#fff"></div>
<svg style="left:899px;top:196px" width="87" height="61" viewBox="214 81 600 450">
<g transform="translate(214,150) scale(.33333)">
<path d="M200,97L555,80" stroke="#ffe1b5" stroke-width="34" stroke-linecap="round" fill="none"/>
<path d="M128,112L165,105L155,420L130,435L115,390Z" fill="#ffd0a0"/>
<path d="M192,610L98,690L155,745Z" fill="#fff" stroke="#ffd0a0" stroke-width="22"/>
<circle cx="260" cy="792" r="88" fill="#ffdcae"/>
<g fill="url(#g1)">
<path d="M430,220C475,222 505,260 512,300C514,322 490,325 487,305C480,275 460,252 432,252C390,255 352,340 350,440C349,530 365,620 400,657C445,650 495,610 520,525L535,590C495,650 440,680 385,680C300,680 238,560 238,440C238,310 320,222 430,220Z"/>
<path d="M610,430C565,432 525,480 525,535C525,610 570,668 635,668L690,668L690,630C665,645 640,640 625,610C605,570 600,490 622,458C640,440 665,450 680,470L695,445C670,432 640,428 610,430Z"/>
<path d="M680,432L780,427C790,430 790,448 785,472C770,530 760,640 773,715C795,700 810,660 820,620C823,608 837,612 835,627C830,680 800,755 765,755C720,755 690,700 680,640C668,570 670,490 680,432Z"/>
</g>
</g>
<g transform="translate(500,140) scale(.33333)">
<path d="M292,850L692,862" stroke="#ffe1b5" stroke-width="38" stroke-linecap="round" fill="none"/>
<path d="M722,365L775,358L775,785L732,800Z" fill="#ffd0a0"/>
<circle cx="722" cy="213" r="80" fill="#ffdcae"/><circle cx="727" cy="212" r="15" fill="#fff"/>
<path d="M545,75L645,65L575,185Z" fill="#fff" stroke="#ffd0a0" stroke-width="22"/>
<g fill="url(#g2)">
<path fill-rule="evenodd" d="M172,243C100,248 40,300 18,400C2,480 -8,580 8,640C22,690 60,717 105,715C155,712 195,670 222,588C225,575 210,572 205,585C190,630 160,675 125,692C100,650 88,560 98,470C130,465 170,462 190,425C207,385 218,330 210,290C205,260 190,243 172,243ZM178,288C150,300 125,380 115,438C150,438 178,415 188,360C195,320 195,290 178,288Z"/>
<path d="M280,238L350,232C362,235 362,250 355,300C342,400 345,570 378,685C410,670 440,630 450,595L462,620C430,670 390,708 340,708C280,708 250,640 250,540C250,430 262,320 272,245Z"/>
<path d="M465,470L545,465C560,470 558,490 550,520C540,570 545,630 565,670C590,660 610,640 618,612C621,600 638,605 636,620C625,665 590,698 550,698C500,698 460,650 458,590C456,540 458,500 465,470Z"/>
<circle cx="505" cy="400" r="40"/>
</g>
</g>
</svg>

<!-- layers -->
<div class="h" style="left:861px;top:261px;width:163px;height:22px"></div>
<span class="t" style="left:866px;top:266px;font-size:9.500px;color:#999">Lớp</span>
<div class="x" style="left:1007px;top:265px;width:15px;height:14px"></div>
<div style="left:861px;top:283px;width:163px;height:269px;background:#333"></div>
<div style="left:864px;top:287px;width:36px;height:14px;background:#222"></div>
<span class="t" style="left:865px;top:288px;font-size:8.300px">Độ trong</span>
<div style="left:904px;top:287px;width:86px;height:13px;background:#222"></div>
<div style="left:905px;top:288px;width:84px;height:11px;background:linear-gradient(90deg,#72bcf0,#4a90d0)"></div>
<span class="t" style="left:995px;top:288px;font-size:8.300px">100 %</span>
<div style="left:864px;top:304px;width:38px;height:16px;background:#222"></div>
<span class="t" style="left:865px;top:307px;font-size:8.300px">Pha trộn</span>
<div style="left:907px;top:305px;width:110px;height:15px;background:#4b4b4b"></div>
<span class="t" style="left:909px;top:307px;font-size:8.300px;color:#aaa">Bình thường</span>
<div style="left:1009px;top:311px;width:0;height:0;border:3px solid transparent;border-bottom:0;border-top:4px solid #aaa"></div>
<div style="left:865px;top:325px;width:64px;height:14px;background:#222"></div>
<div style="left:868px;top:328px;width:7px;height:7px;border:1px solid #444"></div>
<span class="t" style="left:879px;top:326px;font-size:8.300px;color:#777">Bảo vệ alpha</span>
<div style="left:934px;top:325px;width:44px;height:14px;background:#222"></div>
<div style="left:936px;top:328px;width:7px;height:7px;border:1px solid #bbb"></div>
<span class="t" style="left:948px;top:326px;font-size:8.300px">Xén bớt</span>
<div style="left:983px;top:325px;width:36px;height:14px;background:#222"></div>
<div style="left:985px;top:328px;width:7px;height:7px;border:1px solid #bbb"></div>
<span class="t" style="left:997px;top:326px;font-size:8.300px">Khóa</span>

<div class="la" style="top:343px"><div style="left:14px;top:0;width:128px;height:29px;background:#4a98d8"></div><div class="e"></div></div>
<div class="ck" style="left:888px;top:352px;width:26px;height:9px;background:#d8d8d8"></div>
<div style="left:888px;top:353px;width:26px;height:3px;background:#333"></div>
<div style="left:890px;top:357px;width:22px;height:3px;background:#555"></div>
<span class="t" style="left:926px;top:352px;font-size:10px;font-weight:bold;color:#fff">@Khiemvu197</span>
<svg style="left:990px;top:349px" width="14" height="14"><path d="M6 0h2l.5 2 1.700-1 1.600 1.600-1 1.700 2 .5v2.400l-2 .5 1 1.700-1.600 1.600-1.700-1-.5 2H6l-.5-2-1.700 1-1.600-1.600 1-1.700-2-.5V4.800l2-.5-1-1.700L3.800 1 5.500 2z" fill="#fff"/><circle cx="7" cy="7" r="1.500" fill="#4a98d8"/></svg>

<div class="la" style="top:373px"><div class="e"></div><div class="th ck"></div><span class="t" style="left:63px;top:10px;color:#ddd">Lớp4</span></div>
<div class="la" style="top:403px"><div class="e"></div><div class="th ck"></div><span class="t" style="left:63px;top:10px;color:#ddd">Lớp3</span></div>
<div style="left:890px;top:412px;width:22px;height:7px;background:#fb9aa2;opacity:.75;border-radius:3px"></div>
<div class="la" style="top:433px"><div class="e"></div><div class="th ck"></div><span class="t" style="left:63px;top:10px;color:#ddd">Lớp3</span></div>
<div style="left:890px;top:442px;width:22px;height:7px;background:#e2bcd0;opacity:.8;border-radius:3px"></div>
<div class="la" style="top:463px"><div class="e"></div><div class="th ck"></div><span class="t" style="left:63px;top:10px;color:#ddd">Lớp2</span></div>
<div class="la" style="top:493px"><div class="e"></div><div class="th ck"></div><span class="t" style="left:63px;top:10px;color:#ddd">Lớp2</span></div>
<div style="left:893px;top:506px;width:5px;height:5px;background:#ffb48a;border-radius:50%"></div>
<div class="la" style="top:523px;height:5px"></div>
<div style="left:1006px;top:343px;width:15px;height:185px;background:#2b2b2b"></div>
<div style="left:1007px;top:351px;width:13px;height:148px;background:#777;border-radius:4px"></div>
<div style="left:1010px;top:345px;width:0;height:0;border:3px solid transparent;border-top:0;border-bottom:4px solid #999"></div>
<div style="left:1010px;top:521px;width:0;height:0;border:3px solid transparent;border-bottom:0;border-top:4px solid #999"></div>
<div class="b" style="left:865px;top:530px;width:17px;height:19px"></div>
<svg style="left:865px;top:530px" width="17" height="19" fill="none" stroke="#ccc"><path d="M4.500 3.500h5l3 3v9h-8z"/></svg>
<div class="b" style="left:885px;top:530px;width:17px;height:19px"></div>
<svg style="left:885px;top:530px" width="17" height="19" fill="none" stroke="#ccc"><path d="M4.500 3.500h5l3 3v9h-8zM7 8.500h3v4H7z"/></svg>
<div class="b" style="left:905px;top:530px;width:17px;height:19px"></div>
<svg style="left:905px;top:530px" width="17" height="19" fill="none" stroke="#ccc"><path d="M4.500 3.500h5l3 3v9h-8zM8.500 8v5"/></svg>
<div class="b" style="left:926px;top:530px;width:22px;height:19px"></div>
<svg style="left:926px;top:530px" width="22" height="19" fill="none" stroke="#ccc"><path d="M3.500 3.500h5l2 2v5M3.500 3.500v10h5M9 11v5M6.500 13.500h5"/><path d="M15 8h5l-2.500 3z" fill="#ccc" stroke="none"/></svg>
<div class="b" style="left:951px;top:530px;width:18px;height:19px"></div>
<svg style="left:951px;top:530px" width="18" height="19"><path d="M3 5h5l1 2h6v8H3z" fill="#eee"/></svg>
<div style="left:972px;top:534px;width:1px;height:10px;background:#666"></div>
<div class="b" style="left:976px;top:530px;width:18px;height:19px"></div>
<svg style="left:976px;top:530px" width="18" height="19" fill="none" stroke="#ccc"><path d="M3.500 6.500h8v8h-8zM6.500 6V3.500h8v8H12"/></svg>
<div style="left:1013px;top:531px;width:7px;height:17px;background:#444;border-radius:2px"></div>

<!-- taskbar -->
<div style="left:0;top:552px;width:1024px;height:24px;background:linear-gradient(90deg,#2a2d22,#30342a 40%,#333a26 75%,#2f3324)"></div>
<div style="left:166px;top:552px;width:27px;height:24px;background:#55574f"></div>
<div style="left:250px;top:552px;width:27px;height:24px;background:#b0601f"></div>
<div style="left:114px;top:574px;width:21px;height:2px;background:#e8d9bb"></div>
<div style="left:142px;top:574px;width:21px;height:2px;background:#e8d9bb"></div>
<div style="left:166px;top:574px;width:27px;height:2px;background:#e8d9bb"></div>
<div style="left:197px;top:574px;width:21px;height:2px;background:#e8d9bb"></div>
<div style="left:225px;top:574px;width:21px;height:2px;background:#e8d9bb"></div>
<div style="left:250px;top:574px;width:27px;height:2px;background:#e8a060"></div>
<svg style="left:7px;top:558px" width="13" height="13" fill="#fff"><path d="M0 1.800l5.500-.8v5.200H0zM6.300 .9L13 0v6.200H6.300zM0 6.900h5.500v5.200L0 11.300zM6.300 6.900H13V13l-6.700-.9z"/></svg>
<svg style="left:33px;top:556px" width="16" height="16" fill="none" stroke="#eee" stroke-width="1.200"><circle cx="9.500" cy="6.500" r="4.500"/><path d="M6 10l-5 5"/></svg>
<svg style="left:60px;top:557px" width="14" height="14" fill="none" stroke="#eee"><path d="M2.500 3.500h8v7h-8zM0 1.500h13M0 12.500h13M12.500 4v6"/></svg>
<svg style="left:89px;top:556px" width="15" height="16"><path d="M1 5h13v10H1z" fill="#eee"/><path d="M5 5V3h5v2" fill="none" stroke="#eee"/><path d="M4 7h3v3H4z" fill="#e33"/><path d="M8 7h3v3H8z" fill="#3b3"/><path d="M4 11h3v3H4z" fill="#39d"/><path d="M8 11h3v3H8z" fill="#fb3"/></svg>
<svg style="left:118px;top:556px" width="14" height="15"><path d="M0 2h5l1 2h8v10H0z" fill="#f5c542"/><path d="M0 6h14v3H0z" fill="#4aa3df"/></svg>
<div style="left:146px;top:558px;width:13px;height:13px;border-radius:50%;background:conic-gradient(#e33 0 33%,#3a3 0 66%,#fc3 0)"></div>
<div style="left:149.500px;top:561.500px;width:6px;height:6px;border-radius:50%;background:#39d;border:.5px solid #fff"></div>
<div style="left:174px;top:557px;width:13px;height:14px;background:#fff;border-radius:3px"></div>
<div style="left:175.500px;top:559px;width:10px;height:10px;border-radius:50%;background:conic-gradient(#e35 0 25%,#fb3 0 50%,#3b6 0 75%,#39d 0)"></div>
<div style="left:202px;top:558px;width:13px;height:13px;border-radius:50%;background:#1c9fe0"></div>
<span class="t" style="left:205px;top:558px;font-size:10px;font-weight:bold;color:#fff">S</span>
<div style="left:229px;top:557px;width:14px;height:14px;border-radius:50%;background:#f4f8ff"></div>
<div style="left:232px;top:561px;width:8px;height:6px;border-radius:2px;background:#2d6be0"></div>
<svg style="left:257px;top:557px" width="13" height="13"><path d="M0 0h13v13H0z" fill="#1e6fd9"/><path d="M0 13l5-6 3 3 2-2 3 5z" fill="#9fd0ff"/></svg>
<svg style="left:807px;top:560px" width="10" height="6" fill="none" stroke="#eee"><path d="M1 5l4-4 4 4"/></svg>
<svg style="left:824px;top:558px" width="14" height="14"><path d="M.5 .5h11v9H.500z" fill="none" stroke="#ccc"/><path d="M3 3h5v3H3z" fill="#ccc"/><circle cx="10" cy="10" r="3" fill="#f49a18"/></svg>
<svg style="left:842px;top:560px" width="14" height="10"><path d="M3 2h10v7H3z" fill="none" stroke="#ddd"/><path d="M4 3h7v5H4z" fill="#eee"/><path d="M0 1l2 1M1 0v4" stroke="#dbb53b"/></svg>
<div style="left:860px;top:558px;width:12px;height:12px;background:#eee"></div>
<span class="t" style="left:862px;top:558px;font-size:11px;font-weight:bold;color:#d22">V</span>
<svg style="left:880px;top:559px" width="12" height="12" fill="none" stroke="#bbb"><path d="M1 11C2 6 6 2 11 1M4 11C5 8 8 5 11 4M7 11C8 9 9 8 11 7" stroke-dasharray="2 1"/></svg>
<svg style="left:897px;top:558px" width="14" height="12" fill="none" stroke="#eee"><path d="M1 4.500h2.500L6.500 2v9L3.500 8H1zM8.500 4c1 1 1 3 0 4M10.500 2.500c2 2 2 5 0 7"/></svg>
<span class="t" style="left:916px;top:558px;font-size:9.500px;color:#eee">ENG</span>
<span class="t" style="left:945px;top:558px;font-size:9px;color:#eee">5:46 PM</span>
<svg style="left:993px;top:557px" width="14" height="14"><path d="M1 1h12v10H9l-2 2-2-2H1z" fill="#eee"/><path d="M3.500 4h7M3.500 6h7M3.500 8h7" stroke="#555"/></svg>

</div></body></html>
